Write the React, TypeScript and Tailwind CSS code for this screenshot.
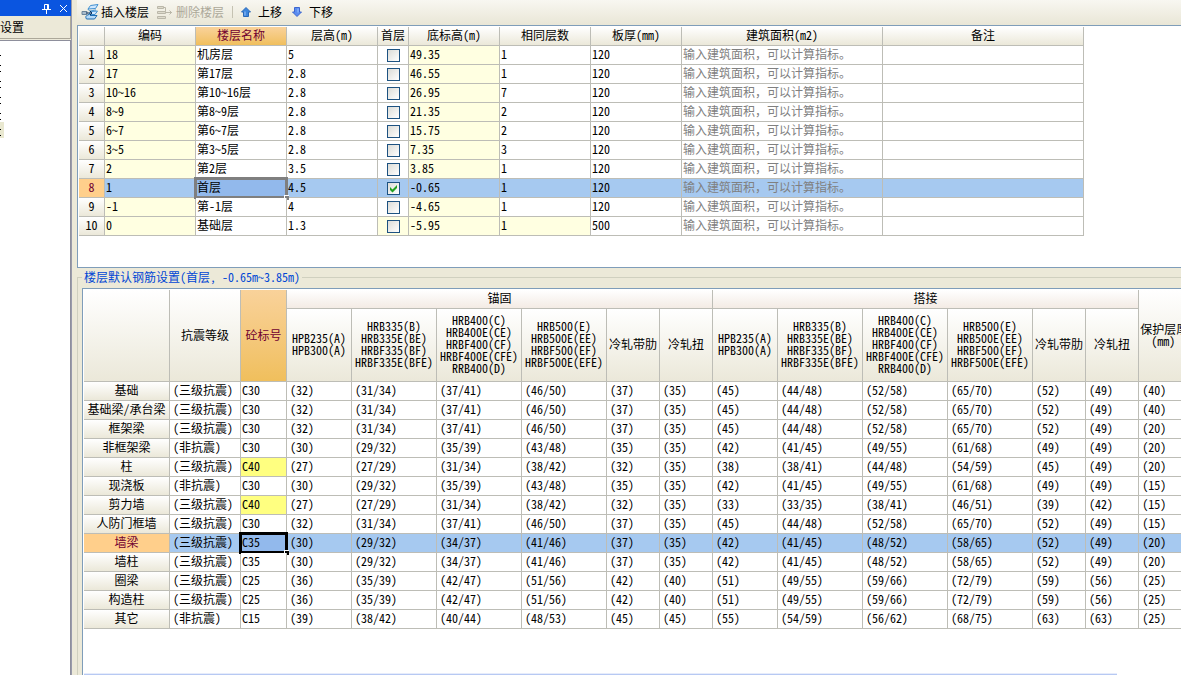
import clsx from "clsx";
import type { ReactNode } from "react";

const AREA_HINT = "输入建筑面积，可以计算指标。";

const floors = [
  { code: "18", name: "机房层", height: "5", base: "49.35", same: "1", slab: "120" },
  { code: "17", name: "第17层", height: "2.8", base: "46.55", same: "1", slab: "120" },
  { code: "10~16", name: "第10~16层", height: "2.8", base: "26.95", same: "7", slab: "120" },
  { code: "8~9", name: "第8~9层", height: "2.8", base: "21.35", same: "2", slab: "120" },
  { code: "6~7", name: "第6~7层", height: "2.8", base: "15.75", same: "2", slab: "120" },
  { code: "3~5", name: "第3~5层", height: "2.8", base: "7.35", same: "3", slab: "120" },
  { code: "2", name: "第2层", height: "3.5", base: "3.85", same: "1", slab: "120" },
  { code: "1", name: "首层", height: "4.5", base: "-0.65", same: "1", slab: "120", first: true },
  { code: "-1", name: "第-1层", height: "4", base: "-4.65", same: "1", slab: "120" },
  { code: "0", name: "基础层", height: "1.3", base: "-5.95", same: "1", slab: "500", bottom: true },
];

const floorColumns = [
  { title: "", width: "w-[26px]" },
  { title: "编码", width: "w-[91px]" },
  { title: "楼层名称", width: "w-[91px]", active: true },
  { title: "层高(m)", width: "w-[91px]" },
  { title: "首层", width: "w-[31px]" },
  { title: "底标高(m)", width: "w-[91px]" },
  { title: "相同层数", width: "w-[91px]" },
  { title: "板厚(mm)", width: "w-[91px]" },
  { title: "建筑面积(m2)", width: "w-[201px]" },
  { title: "备注", width: "w-[201px]" },
];

const steelColumns = [
  "HPB235(A)\nHPB300(A)",
  "HRB335(B)\nHRB335E(BE)\nHRBF335(BF)\nHRBF335E(BFE)",
  "HRB400(C)\nHRB400E(CE)\nHRBF400(CF)\nHRBF400E(CFE)\nRRB400(D)",
  "HRB500(E)\nHRB500E(EE)\nHRBF500(EF)\nHRBF500E(EFE)",
  "冷轧带肋",
  "冷轧扭",
];

const rebarWidths = [
  "w-[86px]",
  "w-[71px]",
  "w-[46px]",
  "w-[65px]",
  "w-[85px]",
  "w-[85px]",
  "w-[85px]",
  "w-[53px]",
  "w-[53px]",
  "w-[65px]",
  "w-[85px]",
  "w-[85px]",
  "w-[85px]",
  "w-[53px]",
  "w-[53px]",
  "w-[55px]",
];

const SEISMIC = "(三级抗震)";
const NON_SEISMIC = "(非抗震)";

const rebarRows = [
  { name: "基础", grade: SEISMIC, mark: "C30", values: "32 31/34 37/41 46/50 37 35 45 44/48 52/58 65/70 52 49 40" },
  { name: "基础梁/承台梁", grade: SEISMIC, mark: "C30", values: "32 31/34 37/41 46/50 37 35 45 44/48 52/58 65/70 52 49 40" },
  { name: "框架梁", grade: SEISMIC, mark: "C30", values: "32 31/34 37/41 46/50 37 35 45 44/48 52/58 65/70 52 49 20" },
  { name: "非框架梁", grade: NON_SEISMIC, mark: "C30", values: "30 29/32 35/39 43/48 35 35 42 41/45 49/55 61/68 49 49 20" },
  { name: "柱", grade: SEISMIC, mark: "C40", changed: true, values: "27 27/29 31/34 38/42 32 35 38 38/41 44/48 54/59 45 49 20" },
  { name: "现浇板", grade: NON_SEISMIC, mark: "C30", values: "30 29/32 35/39 43/48 35 35 42 41/45 49/55 61/68 49 49 15" },
  { name: "剪力墙", grade: SEISMIC, mark: "C40", changed: true, values: "27 27/29 31/34 38/42 32 35 33 33/35 38/41 46/51 39 42 15" },
  { name: "人防门框墙", grade: SEISMIC, mark: "C30", values: "32 31/34 37/41 46/50 37 35 45 44/48 52/58 65/70 52 49 15" },
  { name: "墙梁", grade: SEISMIC, mark: "C35", selected: true, values: "30 29/32 34/37 41/46 37 35 42 41/45 48/52 58/65 52 49 20" },
  { name: "墙柱", grade: SEISMIC, mark: "C35", values: "30 29/32 34/37 41/46 37 35 42 41/45 48/52 58/65 52 49 20" },
  { name: "圈梁", grade: SEISMIC, mark: "C25", values: "36 35/39 42/47 51/56 42 40 51 49/55 59/66 72/79 59 56 25" },
  { name: "构造柱", grade: SEISMIC, mark: "C25", values: "36 35/39 42/47 51/56 42 40 51 49/55 59/66 72/79 59 56 25" },
  { name: "其它", grade: NON_SEISMIC, mark: "C15", values: "39 38/42 40/44 48/53 45 45 55 54/59 56/62 68/75 63 63 25" },
];

const headFill = "bg-linear-to-b from-white to-[#ebe8d9]";
const activeHeadFill = "bg-linear-to-b from-[#f9d29a] to-[#f0bf5c] text-[#700030]";
const gridCell = "h-[19px] border-r border-b border-[#bdbdb6] pt-0 pr-0 pb-0.5 whitespace-nowrap";
const headCell = "border-r border-b border-[#bdbdb6] px-0 pt-0 pb-0.5 font-normal whitespace-nowrap";

const InsertIcon = () => (
  <svg width="18" height="18" viewBox="0 0 18 18" fill="none">
    <path d="M9.500 2.500 17 1.500l-2.500 4-7.500 .500z" fill="#cfe8ff" stroke="#3f8fd0" />
    <path d="M7 6c1 3 3 1.500 8 1" stroke="#3f8fd0" />
    <path d="M9.500 8.500 16.500 8l-2.500 3.500H8z" fill="#cfe8ff" stroke="#3f8fd0" />
    <path d="M8 11.500c-3 1-4 2-2.500 4.500h8l2.500-3.500H9" fill="#b5daf8" stroke="#1f6cb0" />
    <path d="M1 8.500h5v3H1z" fill="#a9bccd" stroke="#6c8499" />
    <path d="M5 10h6M9 8l2 2-2 2" stroke="#12355c" />
  </svg>
);

const RemoveIcon = () => (
  <svg width="18" height="18" viewBox="0 0 18 18" fill="#dedbcd" stroke="#bab7a9">
    <path d="M1.500 3.500h6v2h-6zM1.500 8.500h8v2h-8zM1.500 13.500h8v2h-8z" />
    <path d="M7.500 4.500h2v4M10 9.500h6M13.500 7.500l2 2-2 2" fill="none" />
  </svg>
);

const ArrowIcon = ({ down }: { down?: boolean }) => (
  <svg width="10" height="10" viewBox="0 0 10 10" className={clsx(down && "rotate-180")}>
    <path
      d="M5 .5 9.500 5H7.500v4.500h-5V5H.5z"
      fill={down ? "#5b8cf0" : "#3d86dc"}
      stroke={down ? "#3c66cf" : "#2a69b8"}
      strokeLinejoin="round"
    />
    <path d="M4 4.500v4" stroke="#9cc4ff" />
  </svg>
);

const ToolButton = ({
  icon,
  label,
  disabled,
  className,
}: {
  icon: ReactNode;
  label: string;
  disabled?: boolean;
  className: string;
}) => (
  <button
    type="button"
    disabled={disabled}
    className={clsx("flex items-center whitespace-nowrap disabled:text-[#aca899]", className)}
  >
    {icon}
    {label}
  </button>
);

const SidePanel = () => (
  <aside className="flex w-[72px] shrink-0 flex-col border-r border-[#9a9bab]">
    <div className="flex h-4 items-center justify-end gap-2 bg-[#0a55e0] pr-[3px]">
      <button type="button" aria-label="固定">
        <svg width="9" height="11" viewBox="0 0 9 11" fill="none" stroke="#fff">
          <path d="M2.500 6V1.500h4V6M5.500 2v4M0 6.500h9M4.500 7v4" />
        </svg>
      </button>
      <button type="button" aria-label="关闭">
        <svg width="9" height="9" viewBox="0 0 9 9" stroke="#fff">
          <path d="M1 1l7 7M8 1 1 8" />
        </svg>
      </button>
    </div>
    <div className="flex h-[23px] items-center border-r border-b border-[#aca899] bg-[#ece9d8]">
      设置
    </div>
    <div className="mt-px flex-1 border-t border-r border-[#8e8f9c] bg-white pt-px">
      {[0, 1, 2, 3, 4, 5].map((item) => (
        <div
          key={item}
          className={clsx("flex h-4 w-1 items-center", item === 5 && "bg-[#e9e8d0]")}
        >
          <span
            className={clsx(
              "mt-1 h-[7px] w-px border-b border-black",
              item > 0 && "border-t"
            )}
          />
        </div>
      ))}
    </div>
  </aside>
);

const SelectionFrame = ({ strong }: { strong?: boolean }) => (
  <span
    className={clsx(
      "pointer-events-none absolute -inset-x-0.5 -inset-y-0.5 border-3",
      strong ? "border-black" : "border-[#7f7f7f]"
    )}
  >
    <span
      className={clsx(
        "absolute -right-1 -bottom-1 size-[5px] border-t border-l border-white",
        strong ? "bg-black" : "bg-[#7f7f7f]"
      )}
    />
  </span>
);

const FloorTable = () => (
  <table className="w-[1005px] table-fixed border-separate border-spacing-0">
    <thead>
      <tr>
        {floorColumns.map(({ title, width, active }) => (
          <th
            key={title}
            scope="col"
            className={clsx(headCell, "h-[19px]", width, active ? activeHeadFill : headFill)}
          >
            {title}
          </th>
        ))}
      </tr>
    </thead>
    <tbody>
      {floors.map(({ code, name, height, base, same, slab, first, bottom }, index) => {
        const cell = clsx(gridCell, "pl-px");
        const plain = first ? "bg-[#a6c9f0]" : "bg-white";
        const locked = first ? "bg-[#a6c9f0]" : "bg-[#ffffe1]";

        return (
          <tr key={code}>
            <th
              scope="row"
              className={clsx(
                headCell,
                "h-[19px]",
                first ? "bg-[#ffcf8b] text-[#700030]" : headFill
              )}
            >
              {index + 1}
            </th>
            <td className={clsx(cell, locked)}>{code}</td>
            <td className={clsx(cell, "relative", first ? "bg-[#92b9ec]" : "bg-white")}>
              {name}
              {first && <SelectionFrame />}
            </td>
            <td className={clsx(cell, plain)}>{height}</td>
            <td
              className={clsx(
                "h-[19px] border-r border-b border-[#bdbdb6] p-0",
                bottom ? locked : plain
              )}
            >
              <label className="relative mx-auto block size-[13px]">
                <input
                  type="checkbox"
                  defaultChecked={first}
                  aria-label={`${name} 首层`}
                  className="block size-[13px] peer appearance-none border border-[#1d5281] bg-linear-to-br from-[#dcdcd7] to-white"
                />
                <svg
                  viewBox="0 0 13 13"
                  className="pointer-events-none absolute inset-0 hidden peer-checked:block"
                >
                  <path d="M3 5v3l2.500 2.500L10 6V3L5.500 7.500z" fill="#21a121" />
                </svg>
              </label>
            </td>
            <td className={clsx(cell, locked)}>{base}</td>
            <td className={clsx(cell, bottom ? locked : plain)}>{same}</td>
            <td className={clsx(cell, plain)}>{slab}</td>
            <td className={clsx(cell, plain, "text-[#808080]")}>{AREA_HINT}</td>
            <td className={clsx(cell, plain)} />
          </tr>
        );
      })}
    </tbody>
  </table>
);

const RebarTable = () => (
  <table className="w-[1110px] table-fixed border-separate border-spacing-0">
    <colgroup>
      {rebarWidths.map((width, index) => (
        <col key={index} className={width} />
      ))}
    </colgroup>
    <thead>
      <tr>
        <td rowSpan={2} className={clsx(headCell, headFill)} />
        <th scope="col" rowSpan={2} className={clsx(headCell, headFill)}>
          抗震等级
        </th>
        <th scope="col" rowSpan={2} className={clsx(headCell, activeHeadFill)}>
          砼标号
        </th>
        {["锚固", "搭接"].map((group) => (
          <th
            key={group}
            scope="colgroup"
            colSpan={6}
            className={clsx(headCell, "h-[19px] bg-linear-to-b from-white to-[#f3ebe4]")}
          >
            {group}
          </th>
        ))}
        <th scope="col" rowSpan={2} className={clsx(headCell, headFill, "text-left leading-3")}>
          <span className="block pl-px">保护层厚</span>
          <span className="block pl-3">(mm)</span>
        </th>
      </tr>
      <tr>
        {[...steelColumns, ...steelColumns].map((title, index) => (
          <th
            key={index}
            scope="col"
            className="h-[73px] border-r border-b border-[#bdbdb6] bg-linear-to-b from-white to-[#ebe8d9] px-0 pt-0 pb-0.5 leading-3 font-normal whitespace-pre"
          >
            {title}
          </th>
        ))}
      </tr>
    </thead>
    <tbody>
      {rebarRows.map(({ name, grade, mark, changed, selected, values }) => {
        const fill = selected ? "bg-[#a6c9f0]" : "bg-white";

        return (
          <tr key={name}>
            <th
              scope="row"
              className={clsx(
                headCell,
                "h-[19px]",
                selected ? "bg-[#ffcf8b] text-[#700030]" : headFill
              )}
            >
              {name}
            </th>
            <td className={clsx(gridCell, fill, "pl-[3px]")}>{grade}</td>
            <td
              className={clsx(
                gridCell,
                "relative pl-px",
                changed ? "bg-[#ffff80]" : selected ? "bg-[#92b9ec]" : "bg-white"
              )}
            >
              {mark}
              {selected && <SelectionFrame strong />}
            </td>
            {values.split(" ").map((value, index) => (
              <td key={index} className={clsx(gridCell, fill, "pl-[3px]")}>
                ({value})
              </td>
            ))}
          </tr>
        );
      })}
    </tbody>
  </table>
);

export default function App() {
  return (
    <div className="flex h-screen overflow-hidden bg-[#ece9d8] font-['Noto_Sans_Mono_CJK_SC','Noto_Sans_CJK_SC',monospace] text-xs leading-4 text-black">
      <SidePanel />

      <main className="flex min-w-0 flex-1 flex-col pl-[5px]">
        <div
          role="toolbar"
          className="flex h-[25px] shrink-0 items-center bg-linear-to-b from-[#f8f7f1] to-[#e9e6d6] pb-0.5 pl-1"
        >
          <ToolButton icon={<InsertIcon />} label="插入楼层" className="mr-[7px] gap-0.5" />
          <ToolButton icon={<RemoveIcon />} label="删除楼层" className="gap-0.5" disabled />
          <span className="mx-2 h-3 w-px bg-[#c5c2b2]" />
          <ToolButton icon={<ArrowIcon />} label="上移" className="mr-[10px] gap-[7px]" />
          <ToolButton icon={<ArrowIcon down />} label="下移" className="gap-[7px]" />
        </div>

        <section className="h-[243px] shrink-0 overflow-hidden border-y border-l border-[#7f9db9] bg-white pt-px pl-px">
          <FloorTable />
        </section>

        <fieldset className="mt-px flex min-h-0 min-w-0 flex-1 flex-col border-t border-l border-[#d0d0bf] pl-1">
          <legend className="px-0.5 text-[#0046d5]">
            楼层默认钢筋设置(首层, -0.65m~3.85m)
          </legend>
          <div className="mt-[3px] flex min-h-0 flex-1 flex-col overflow-hidden border-t border-l border-[#7f9db9] bg-white pt-px pl-px">
            <RebarTable />
            <div className="mt-auto mr-16 h-[2px] border-t border-[#e6ecfb] bg-[#b7c9f3]" />
          </div>
        </fieldset>
      </main>
    </div>
  );
}
